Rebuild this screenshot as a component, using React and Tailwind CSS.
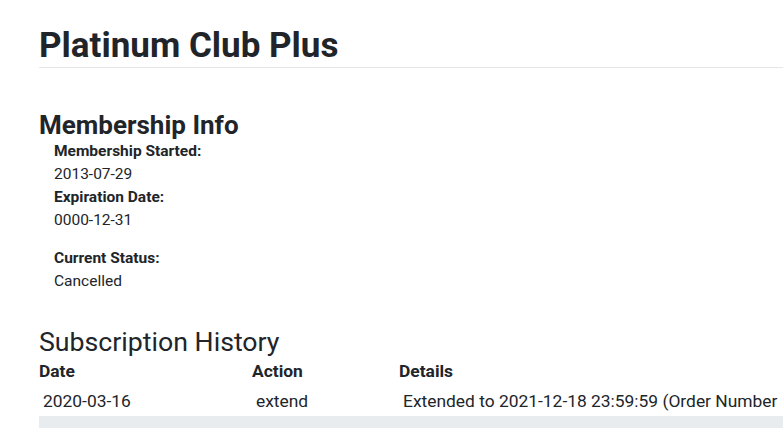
export default function App() {
  const font = { fontFamily: "Roboto, 'Liberation Sans', sans-serif" };
  return (
    <div className="w-[783px] h-[428px] overflow-hidden bg-white text-[#212529]" style={font}>
      <div className="pl-[39px]">
        <h1 className="mt-[26px] text-[35px] leading-[40px] font-bold pb-[1px] border-b border-[#e5e5e5]">
          Platinum Club Plus
        </h1>
        <h2 className="mt-[42px] text-[26px] leading-[30px] font-bold">Membership Info</h2>
        <div className="pl-[15px] text-[15.5px] leading-[23px]">
          <div className="font-bold">Membership Started:</div>
          <div>2013-07-29</div>
          <div className="font-bold">Expiration Date:</div>
          <div>0000-12-31</div>
          <div className="font-bold mt-[15px]">Current Status:</div>
          <div>Cancelled</div>
        </div>
        <h2 className="mt-[34px] text-[26.7px] leading-[30px] font-normal">Subscription History</h2>
        <table className="mt-[3px] text-[17.4px] leading-[23px] whitespace-nowrap border-collapse w-[820px] table-fixed">
          <thead>
            <tr>
              <th className="text-left font-bold p-0 pb-[3px] w-[213px]">Date</th>
              <th className="text-left font-bold p-0 pb-[3px] w-[147px]">Action</th>
              <th className="text-left font-bold p-0 pb-[3px]">Details</th>
            </tr>
          </thead>
          <tbody>
            <tr>
              <td className="px-[4px] pt-[4px] pb-[3px]">2020-03-16</td>
              <td className="px-[4px] pt-[4px] pb-[3px]">extend</td>
              <td className="px-[4px] pt-[4px] pb-[3px]">Extended to 2021-12-18 23:59:59 (Order Number</td>
            </tr>
            <tr className="bg-[#e9ecef]">
              <td className="p-[4px]">&nbsp;</td>
              <td className="p-[4px]">&nbsp;</td>
              <td className="p-[4px]">&nbsp;</td>
            </tr>
          </tbody>
        </table>
      </div>
    </div>
  );
}
